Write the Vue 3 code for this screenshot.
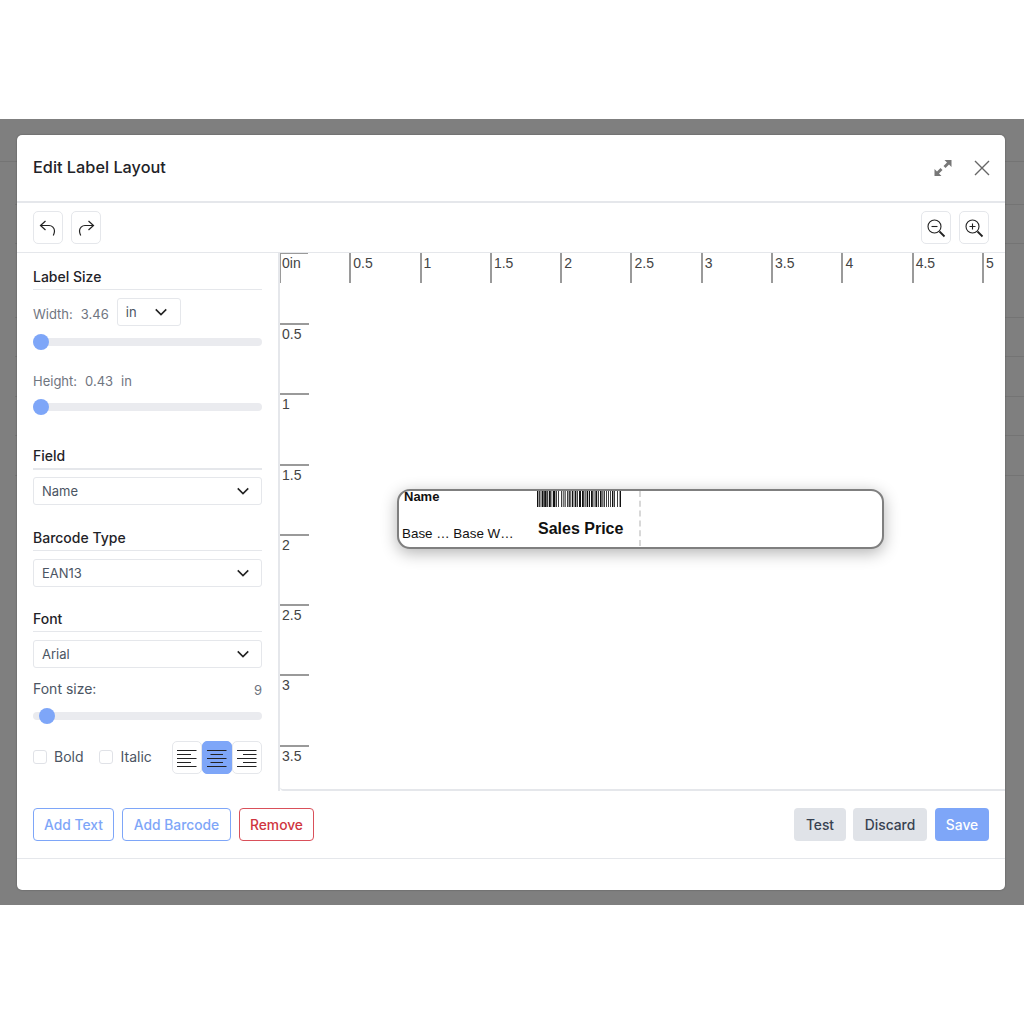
<script setup>
const hTicks = ['0in', '0.5', '1', '1.5', '2', '2.5', '3', '3.5', '4', '4.5', '5']
const vTicks = ['0.5', '1', '1.5', '2', '2.5', '3', '3.5']
const underlay = [43, 43, 39, 74, 39, 40, 39, 40]
const bars = [
  [0,1.4],[2.2,.8],[3.6,.8],[5,1.6],[7.2,2.4],[10.2,1],[12,1.8],[14.6,.6],[16,2.4],[19,.8],[21,.8],
  [24,.8],[25.8,.8],[27.6,1],[30,.8],[31.6,1.2],[33.4,.8],[35,1],[36.6,.8],[38,1.4],[40,.8],[42,2],
  [45,1.8],[47.6,1],[49.6,1.6],[52,1],[54,1.8],[56.6,.8],[58.4,1.8],[61,.8],[63,1.6],[65.4,1],
  [67.2,.8],[69,.8],[71,.8],[73,.8],[75,1.4],[77,.8],[80,.8],[82.6,1.4]
]
</script>

<template>
  <div class="page">
    <div class="backdrop">
      <div v-for="(h, i) in underlay" :key="i" class="under-row" :style="{ height: h + 'px' }"></div>
    </div>
    <section class="modal">
      <header class="head">
        <h1>Edit Label Layout</h1>
        <div class="head-actions">
          <svg width="18" height="18" viewBox="0 0 18 18" fill="#777"><path d="M10.500 1H17.500V8L15 5.500 11.500 9 9.500 7 13 3.500zM7.500 17H.5V10L3 12.500 6.500 9 8.500 11 5 14.500z"/></svg>
          <svg width="16" height="16" viewBox="0 0 16 16" fill="none" stroke="#666" stroke-width="1.4"><path d="M1 1l14 14M15 1L1 15"/></svg>
        </div>
      </header>
      <div class="toolbar">
        <div class="tools">
          <button class="tool"><svg width="18" height="20" viewBox="0 0 18 20" fill="none" stroke="#222" stroke-width="1.2"><path d="M6.500 3 1.500 7.500 6.500 12M1.500 7.500H10a5.500 5.500 0 0 1 5.500 5.500c0 1.500-.5 3-1.200 4.500"/></svg></button>
          <button class="tool"><svg width="18" height="20" viewBox="0 0 18 20" fill="none" stroke="#222" stroke-width="1.200"><path d="M11.500 3l5 4.500-5 4.500M16.500 7.500H8A5.500 5.500 0 0 0 2.500 13c0 1.500.5 3 1.200 4.500"/></svg></button>
        </div>
        <div class="tools">
          <button class="tool"><svg width="20" height="20" viewBox="0 0 20 20" fill="none" stroke="#222" stroke-width="1.100"><circle cx="8.500" cy="8.500" r="6.500"/><path d="M5.500 8.500h6"/><path stroke-width="1.800" d="M13.500 13.500l5 5"/></svg></button>
          <button class="tool"><svg width="20" height="20" viewBox="0 0 20 20" fill="none" stroke="#222" stroke-width="1.100"><circle cx="8.500" cy="8.500" r="6.500"/><path d="M5.500 8.500h6M8.500 5.500v6"/><path stroke-width="1.800" d="M13.500 13.500l5 5"/></svg></button>
        </div>
      </div>
      <div class="body">
        <aside class="side">
          <h2 class="first">Label Size</h2>
          <div class="size-row">
            <span class="txt">Width:</span><span class="val txt">3.46</span>
            <div class="unit">in
              <svg width="14" height="14" viewBox="0 0 16 16" fill="none" stroke="#222" stroke-width="1.800"><path d="M2 5l6 6 6-6"/></svg>
            </div>
          </div>
          <div class="slider s-w"><i></i></div>
          <div class="size-row h"><span>Height:</span><span class="val">0.43</span><span class="val">in</span></div>
          <div class="slider s-h"><i></i></div>

          <h2 class="f1">Field</h2>
          <div class="select s1">Name<svg width="14" height="14" viewBox="0 0 16 16" fill="none" stroke="#222" stroke-width="1.800"><path d="M2 5l6 6 6-6"/></svg></div>
          <h2 class="f2">Barcode Type</h2>
          <div class="select">EAN13<svg width="14" height="14" viewBox="0 0 16 16" fill="none" stroke="#222" stroke-width="1.800"><path d="M2 5l6 6 6-6"/></svg></div>
          <h2 class="f3">Font</h2>
          <div class="select">Arial<svg width="14" height="14" viewBox="0 0 16 16" fill="none" stroke="#222" stroke-width="1.800"><path d="M2 5l6 6 6-6"/></svg></div>
          <div class="fs-row"><span class="fs-label">Font size:</span><span class="nine">9</span></div>
          <div class="slider s-f"><i></i></div>
          <div class="style-row">
            <label class="check"><b></b>Bold</label>
            <label class="check it"><b></b>Italic</label>
            <div class="aligns">
              <button class="al"><svg width="20" height="21" viewBox="0 0 20 21" stroke="#222" stroke-width="1.200"><path d="M0 3.500h19.500M0 7.500h14M0 11.500h19.500M0 15.500h14M0 19.500h19.500"/></svg></button>
              <button class="al on"><svg width="20" height="21" viewBox="0 0 20 21" stroke="#222" stroke-width="1.200"><path d="M0 3.500h19.500M3.500 7.500h12.500M0 11.500h19.500M3.500 15.500h12.500M0 19.500h19.500"/></svg></button>
              <button class="al"><svg width="20" height="21" viewBox="0 0 20 21" stroke="#222" stroke-width="1.200"><path d="M0 3.500h19.500M6 7.500h13.500M0 11.500h19.500M6 15.500h13.500M0 19.500h19.500"/></svg></button>
            </div>
          </div>
        </aside>
        <div class="canvas">
          <div class="h-ruler">
            <div v-for="t in hTicks" :key="t" class="h-tick">{{ t }}</div>
          </div>
          <div class="v-ruler">
            <div v-for="t in vTicks" :key="t" class="v-tick">{{ t }}</div>
          </div>
          <div class="label">
            <span class="l-name">Name</span>
            <span class="l-base">Base … Base W…</span>
            <svg class="l-bar" width="85" height="16" viewBox="0 0 85 16" fill="#111">
              <rect v-for="(b, i) in bars" :key="i" :x="b[0]" y="0" :width="b[1]" height="16" />
            </svg>
            <span class="l-price">Sales Price</span>
            <i class="l-dash"></i>
          </div>
        </div>
      </div>
      <footer class="foot">
        <div class="btns">
          <button class="btn outline w-text">Add Text</button>
          <button class="btn outline w-bar">Add Barcode</button>
          <button class="btn danger w-rem">Remove</button>
        </div>
        <div class="btns">
          <button class="btn grey w-test">Test</button>
          <button class="btn grey w-disc">Discard</button>
          <button class="btn save w-save">Save</button>
        </div>
      </footer>
      <div class="tail"></div>
    </section>
  </div>
</template>

<style>
html, body { margin: 0; background: #fff; }
</style>

<style scoped>
* { box-sizing: border-box; }
.page { position: relative; width: 1024px; height: 1024px; padding-top: 119px; font-family: Inter, "Liberation Sans", sans-serif; color: #374151; }
.backdrop { height: 786px; background: #7f7f7f; }
.under-row { border-bottom: 1px solid #747474; margin-left: 15px; }
.under-row:first-child { margin-left: 0; }
.modal { position: absolute; left: 17px; top: 135px; width: 988px; height: 755px; background: #fff; border-radius: 5px; display: flex; flex-direction: column; box-shadow: 0 0 2px rgba(0,0,0,.35); }
.head { height: 68px; flex: none; display: flex; align-items: center; justify-content: space-between; padding: 0 15px 2px 16px; border-bottom: 2px solid #e5e7eb; }
h1 { margin: 0; font-size: 16.300px; font-weight: 500; color: #1f2328; }
.head-actions { display: flex; align-items: center; gap: 22px; margin-top: 2px; }
.toolbar { height: 50px; flex: none; display: flex; align-items: center; justify-content: space-between; padding: 0 16px; border-bottom: 1px solid #e5e7eb; }
.tools { display: flex; gap: 8px; }
.tool { width: 30px; height: 33px; padding: 0; background: #fff; border: 1px solid #e5e7eb; border-radius: 5px; display: flex; align-items: center; justify-content: center; }
.body { height: 538px; flex: none; display: flex; }
.side { width: 263px; flex: none; padding: 16px 16px 0; border-right: 2px solid #e5e7eb; }
h2 { margin: 0; font-size: 14px; line-height: 20px; font-weight: 500; color: #1f2328; border-bottom: 1px solid #e5e7eb; height: 23px; }
h2.first { margin-top: -2px; }
h2.f1 { margin-top: 35px; border-bottom-width: 2px; height: 24px; }
h2.f2 { margin-top: 23px; }
h2.f3 { margin-top: 22px; }
.size-row { display: flex; align-items: center; height: 28px; margin-top: 8px; font-size: 13px; color: #6f757f; }
.size-row .val { margin-left: 8px; }
.size-row .txt { padding-top: 4px; }
.size-row.h { height: 20px; margin-top: 25px; }
.unit { margin-left: 8px; width: 64px; height: 28px; border: 1px solid #e5e7eb; border-radius: 3px; display: flex; align-items: center; justify-content: space-between; padding: 0 12px 0 8px; color: #4b5563; font-size: 13px; }
.slider { position: relative; height: 8px; border-radius: 4px; background: #eaebef; }
.slider i { position: absolute; top: -4px; left: 0; width: 16px; height: 16px; border-radius: 50%; background: #7ea6f8; }
.s-w { margin-top: 12px; }
.s-h { margin-top: 12px; }
.s-f { margin-top: 13px; }
.s-f i { left: 6px; }
.select { margin-top: 8px; height: 28px; border: 1px solid #e5e7eb; border-radius: 3px; display: flex; align-items: center; justify-content: space-between; padding: 0 11px 0 8px; font-size: 13px; color: #4b5563; }
.select.s1 { margin-top: 7px; }
.fs-row { display: flex; justify-content: space-between; align-items: center; height: 20px; margin-top: 11px; font-size: 14px; color: #4b5563; }
.fs-label { padding-bottom: 2px; }
.nine { color: #6f757f; font-size: 13px; padding-top: 2px; }
.style-row { display: flex; align-items: center; margin-top: 21px; height: 33px; font-size: 14px; color: #4b5563; }
.check { display: flex; align-items: center; gap: 7px; margin-right: 15px; padding-bottom: 2px; }
.check.it { margin-right: 0; gap: 8px; }
.check b { width: 14px; height: 14px; border: 1px solid #e0e2e7; border-radius: 3px; }
.aligns { display: flex; margin-left: auto; }
.al { width: 30px; height: 33px; padding: 0; background: #fff; border: 1px solid #e5e7eb; border-radius: 5px; display: flex; align-items: center; justify-content: center; }
.al.on { background: #7ea6f8; border-color: #7ea6f8; }
.canvas { position: relative; flex: 1; border-bottom: 2px solid #e5e7eb; border-bottom-left-radius: 4px; font-family: "Liberation Sans", sans-serif; color: #444; font-size: 14px; overflow: hidden; }
.h-ruler { display: flex; height: 30px; margin-left: -1px; }
.h-tick { width: 70.3px; flex: none; height: 30px; border-left: 2px solid #9a9a9a; padding: 2px 0 0 2px; line-height: 16px; }
.h-tick:first-child { border-top: 1px solid #9a9a9a; width: 29px; margin-right: 41.3px; padding: 1px 0 0 1px; }
.v-ruler { width: 29px; margin-top: 40px; }
.v-tick { height: 70.3px; border-top: 2px solid #9a9a9a; padding: 1px 0 0 2px; line-height: 16px; }
.label { position: absolute; left: 117px; top: 236px; width: 487px; height: 60px; background: #fff; border: 2px solid #7f7f7f; border-radius: 13px; box-shadow: 0 4px 16px rgba(0,0,0,.3); color: #111; }
.label span, .l-bar, .l-dash { position: absolute; white-space: nowrap; }
.l-name { left: 5px; top: -1px; font-weight: 700; font-size: 13px; line-height: 14px; }
.l-base { left: 3px; top: 35px; font-size: 13.400px; line-height: 16px; }
.l-bar { left: 138px; top: 0; }
.l-price { left: 139px; top: 29px; font-weight: 700; font-size: 16px; line-height: 18px; }
.l-dash { left: 240px; top: 0; height: 55px; border-left: 2px dashed #d8d8d8; }
.foot { height: 68px; flex: none; display: flex; align-items: center; justify-content: space-between; padding: 0 16px; border-bottom: 1px solid #e5e7eb; }
.btns { display: flex; gap: 8px; }
.btn { height: 33px; padding: 0; font: 500 13.800px Inter, "Liberation Sans", sans-serif; border-radius: 4px; border: 1px solid transparent; white-space: nowrap; }
.w-text { width: 81px; }
.w-bar { width: 109px; }
.w-rem { width: 75px; }
.w-test { width: 52px; margin-right: -1px; }
.w-disc { width: 74px; }
.w-save { width: 54px; }
.outline { background: #fff; border-color: #7ea6f8; color: #7ea6f8; }
.danger { background: #fff; border-color: #d9505a; color: #cf3540; }
.grey { background: #e0e3e8; color: #374151; }
.save { background: #7ea6f8; color: #fff; }
.tail { flex: 1; }
</style>
